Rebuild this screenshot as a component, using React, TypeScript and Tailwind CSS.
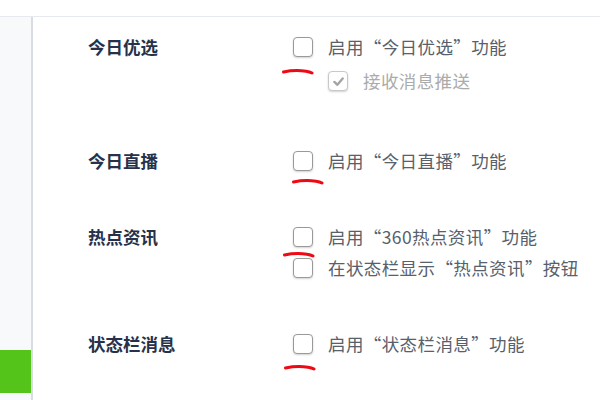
import React from 'react'

const font = { fontFamily: '"Microsoft YaHei", "Noto Sans CJK SC", "Noto Sans", sans-serif' }

function Box({ checked, disabled }: { checked?: boolean; disabled?: boolean }) {
  return (
    <span
      className={`flex h-[20px] w-[20px] shrink-0 items-center justify-center rounded-[4px] border-[1.5px] bg-white shadow-[0_1px_2px_rgba(0,0,0,0.18)] ${
        disabled ? 'border-[#c8c8c8]' : 'border-[#999]'
      }`}
    >
      {checked && (
        <svg width="13" height="13" viewBox="0 0 14 14">
          <path d="M2.5 7.5 L5.8 10.5 L11.5 3.8" fill="none" stroke="#a5a5a5" strokeWidth="2.6" strokeLinecap="round" strokeLinejoin="round" />
        </svg>
      )}
    </span>
  )
}

function Option({ text, checked, disabled, indent, className = '' }: { text: string; checked?: boolean; disabled?: boolean; indent?: boolean; className?: string }) {
  return (
    <div className={`flex h-[30px] items-center ${indent ? 'pl-[35px]' : ''} ${className}`}>
      <Box checked={checked} disabled={disabled} />
      <span className={`ml-[15px] whitespace-nowrap text-[17.5px] tracking-[0.4px] ${disabled ? 'text-[#ababab]' : 'text-[#57606b]'}`}>{text}</span>
    </div>
  )
}

function Row({ label, className = '', children }: { label: string; className?: string; children: React.ReactNode }) {
  return (
    <div className={`flex ${className}`}>
      <div className="flex h-[30px] w-[205px] shrink-0 items-center text-[17.5px] font-bold text-[#27324a]">{label}</div>
      <div className="flex flex-col">{children}</div>
    </div>
  )
}

// hand-drawn red marks (annotation overlay)
function Mark({ x, y }: { x: number; y: number }) {
  return (
    <svg className="pointer-events-none absolute" style={{ left: x, top: y }} width="32" height="8" viewBox="0 0 32 8">
      <path d="M1.5 4 C 9 2.4, 17 2.2, 24 3.2 C 27 3.6, 29 4.4, 30 5" fill="none" stroke="#ee0a14" strokeWidth="3" strokeLinecap="round" />
    </svg>
  )
}

export default function App() {
  return (
    <div className="relative h-[400px] w-[600px] overflow-hidden bg-white" style={font}>
      <div className="h-[17px] border-b border-[#e6e9ee] bg-white" />
      <div className="flex h-[383px]">
        <div className="w-[33px] shrink-0 border-r-2 border-[#d9dce2] bg-[#f7f9fb]">
          <div className="mt-[333px] h-[43px] bg-[#55c41a]" />
        </div>
        <div className="flex flex-1 flex-col pl-[55px] pt-[15px]">
          <Row label="今日优选">
            <Option text="启用“今日优选”功能" />
            <Option text="接收消息推送" checked disabled indent className="mt-[4px]" />
          </Row>
          <Row label="今日直播" className="mt-[50px]">
            <Option text="启用“今日直播”功能" />
          </Row>
          <Row label="热点资讯" className="mt-[46px]">
            <Option text="启用“360热点资讯”功能" />
            <Option text="在状态栏显示“热点资讯”按钮" className="mt-[1px]" />
          </Row>
          <Row label="状态栏消息" className="mt-[46px]">
            <Option text="启用“状态栏消息”功能" />
          </Row>
        </div>
      </div>
      <Mark x={282} y={68} />
      <Mark x={292} y={178} />
      <Mark x={283} y={251} />
      <Mark x={284} y={364} />
    </div>
  )
}
